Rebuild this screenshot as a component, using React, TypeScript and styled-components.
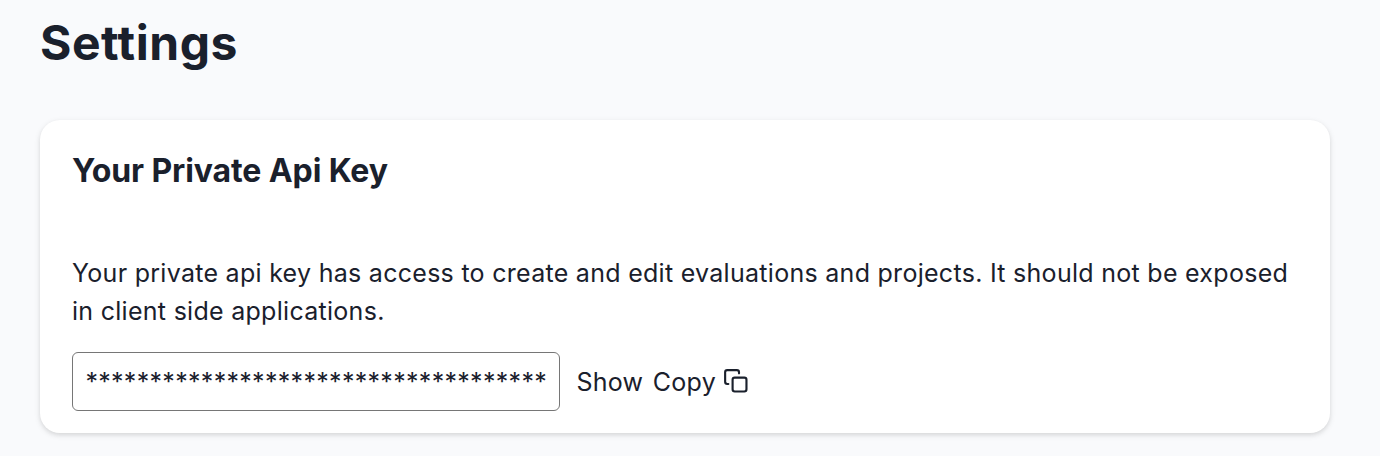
import React from "react";
import styled, { createGlobalStyle } from "styled-components";

const GlobalStyle = createGlobalStyle`
  * { box-sizing: border-box; }
  body { margin: 0; background: #f9fafc; color: #1a202c; font-family: Inter, "Liberation Sans", sans-serif; }
`;
const Page = styled.main`
  height: 456px;
  padding: 14px 50px 0 40px;
  overflow: hidden;
`;
const Title = styled.h1`
  margin: 0 0 48px;
  font-size: 48px;
  line-height: 58px;
  font-weight: 700;
  letter-spacing: 0.55px;
`;
const Card = styled.section`
  height: 313px;
  padding: 32px;
  background: #fff;
  border-radius: 20px;
  box-shadow: 0 2px 6px rgba(0, 0, 0, 0.1), 0 2px 4px rgba(0, 0, 0, 0.06);
`;
const CardTitle = styled.h2`
  margin: 0 0 64px;
  font-size: 32px;
  line-height: 38px;
  font-weight: 700;
  letter-spacing: -0.11px;
`;
const Description = styled.p`
  margin: 0 0 22px;
  font-size: 25px;
  line-height: 38px;
  letter-spacing: 0.283px;
`;
const KeyRow = styled.div`
  display: flex;
  align-items: center;
`;
const KeyField = styled.div`
  width: 488px;
  height: 59px;
  padding: 1px 12.4px 0;
  border: 1px solid #767676;
  border-radius: 6px;
  font-size: 25px;
  line-height: 57px;
  letter-spacing: 0.3px;
  white-space: nowrap;
`;
const Action = styled.button<{ $gap: number }>`
  display: flex;
  align-items: center;
  gap: 7px;
  margin: 0 0 0 ${({ $gap }) => $gap}px;
  padding: 0;
  border: 0;
  background: none;
  color: inherit;
  font: inherit;
  font-size: 25px;
  letter-spacing: 0.25px;
  line-height: 38px;
`;
const CopyGlyph = styled.svg`
  width: 25.6px;
  height: 25.6px;
  margin-bottom: 2px;
`;

const CopyIcon = () => (
  <CopyGlyph viewBox="0 0 24 24" fill="none" stroke="currentColor" strokeWidth="2" strokeLinecap="round" strokeLinejoin="round">
    <rect x="9" y="9" width="13" height="13" rx="2" />
    <path d="M5 15H4a2 2 0 0 1-2-2V4a2 2 0 0 1 2-2h9a2 2 0 0 1 2 2v1" />
  </CopyGlyph>
);

export default function App() {
  return (
    <>
      <GlobalStyle />
      <Page>
        <Title>Settings</Title>
        <Card>
          <CardTitle>Your Private Api Key</CardTitle>
          <Description>
            Your private api key has access to create and edit evaluations and projects. It should not be exposed in client side applications.
          </Description>
          <KeyRow>
            <KeyField>{"*".repeat(36)}</KeyField>
            <Action $gap={16.5}>Show</Action>
            <Action $gap={9.5}>Copy <CopyIcon /></Action>
          </KeyRow>
        </Card>
      </Page>
    </>
  );
}
